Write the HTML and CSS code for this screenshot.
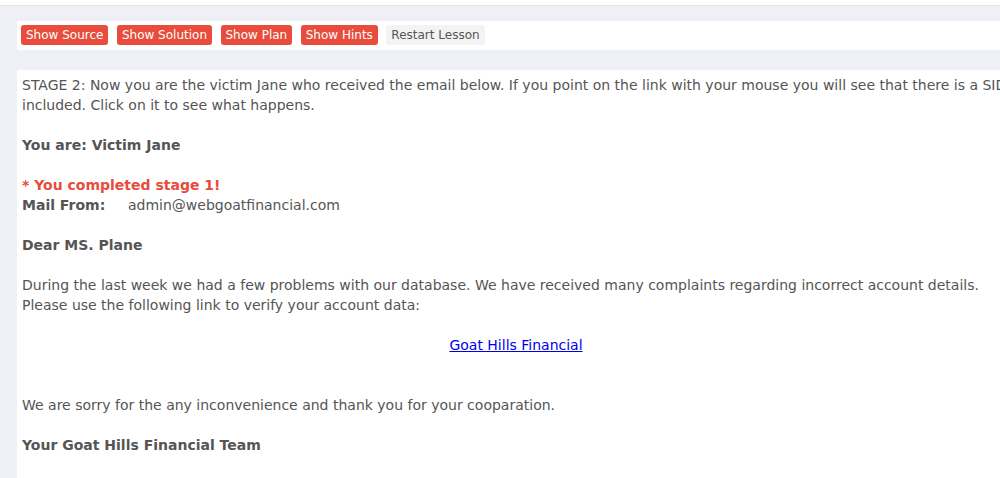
FILE: index.html
```html
<!DOCTYPE html>
<html>
<head>
<meta charset="utf-8">
<link rel="stylesheet" href="styles.css">
</head>
<body>
<div class="topstrip"></div>
<main class="page">
  <div class="toolbar">
    <button class="btn btn-red">Show Source</button>
    <button class="btn btn-red">Show Solution</button>
    <button class="btn btn-red">Show Plan</button>
    <button class="btn btn-red">Show Hints</button>
    <button class="btn btn-light">Restart Lesson</button>
  </div>
  <section class="lesson">
    <p class="line">STAGE 2: Now you are the victim Jane who received the email below. If you point on the link with your mouse you will see that there is a SID included. Click on it to see what happens.</p>
    <p class="line bold gap">You are: Victim Jane</p>
    <p class="line bold red gap">* You completed stage 1!</p>
    <p class="line"><span class="label bold">Mail From:</span>admin@webgoatfinancial.com</p>
    <p class="line bold gap">Dear MS. Plane</p>
    <p class="line gap">During the last week we had a few problems with our database. We have received many complaints regarding incorrect account details. Please use the following link to verify your account data:</p>
    <p class="line center gap"><a href="#" class="link">Goat Hills Financial</a></p>
    <p class="line gap2">We are sorry for the any inconvenience and thank you for your cooparation.</p>
    <p class="line bold gap">Your Goat Hills Financial Team</p>
  </section>
</main>
</body>
</html>
```

FILE: styles.css
```css
html, body {
  margin: 0;
  padding: 0;
  overflow: hidden;
}
body {
  background: #eff0f5;
  font-family: "DejaVu Sans", sans-serif;
  color: #555555;
  height: 478px;
}
.topstrip {
  height: 5px;
  background: #ffffff;
  border-bottom: 1px solid #e3e4ea;
}
.page {
  width: 998px;
  margin-left: 17px;
  padding-top: 15px;
}
.toolbar {
  background: #ffffff;
  padding: 4px 4px 5px;
  display: flex;
  gap: 8.5px;
}
.btn {
  font-family: "DejaVu Sans", sans-serif;
  font-size: 12px;
  line-height: 19px;
  height: 20px;
  padding: 1px 5px 0;
  border: 0;
  border-radius: 3px;
  margin: 0;
}
.btn-red {
  background: #e74c3c;
  color: #ffffff;
}
.btn-light {
  background: #f3f3f3;
  color: #555555;
}
.lesson {
  margin-top: 20px;
  background: #ffffff;
  padding: 5px 5px 40px;
  font-size: 14px;
  line-height: 20px;
}
.line {
  margin: 0;
}
.gap {
  margin-top: 20px;
}
.gap2 {
  margin-top: 40px;
}
.bold {
  font-weight: bold;
}
.red {
  color: #e74c3c;
}
.label {
  display: inline-block;
  width: 106px;
}
.center {
  text-align: center;
}
.link {
  color: #0000ee;
  text-decoration: underline;
}
```
